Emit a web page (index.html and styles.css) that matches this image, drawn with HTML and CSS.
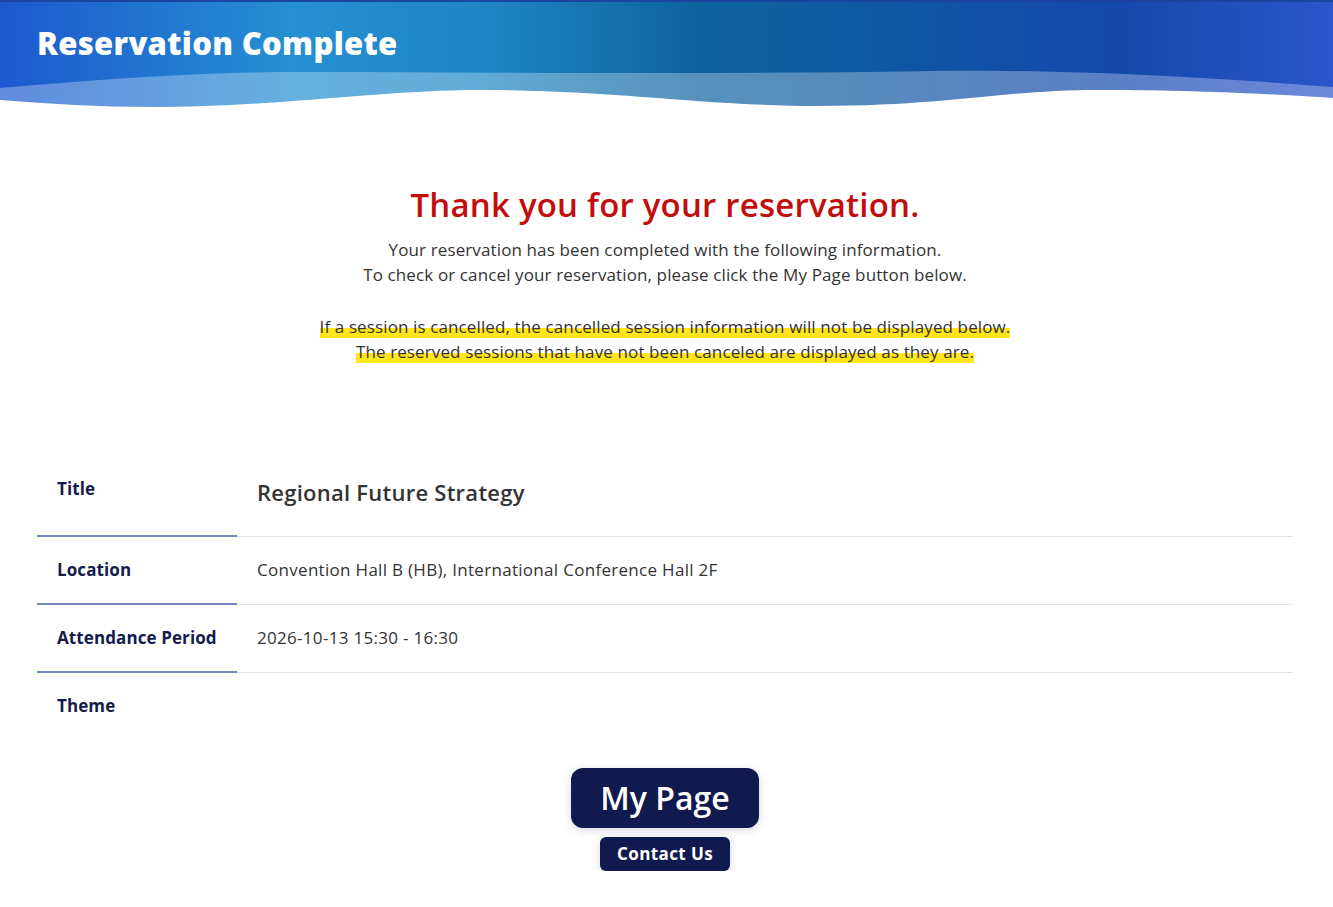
FILE: index.html
```html
<!DOCTYPE html>
<html lang="en">
<head>
<meta charset="utf-8">
<title>Reservation Complete</title>
<link rel="stylesheet" href="styles.css">
</head>
<body>
<header class="hero">
  <h1 class="hero-title">Reservation Complete</h1>
  <svg class="hero-wave" viewBox="0 0 1333 40" preserveAspectRatio="none" aria-hidden="true">
    <path d="M0 21 C 100 12, 200 5, 300 5 C 500 5, 700 8, 930 4 C 1100 2, 1250 14, 1333 20 L1333 40 L0 40 Z" fill="rgba(255,255,255,0.3)"/>
    <path d="M0 33 C 50 37, 100 40, 150 40 C 280 40, 380 23, 480 23 C 620 23, 700 39, 820 39 C 950 39, 1000 23, 1100 23 C 1200 23, 1290 28, 1333 31 L1333 40 L0 40 Z" fill="#ffffff"/>
  </svg>
</header>

<main class="content">
  <section class="intro">
    <h2 class="thanks">Thank you for your reservation.</h2>
    <p class="lead">Your reservation has been completed with the following information.<br>To check or cancel your reservation, please click the My Page button below.</p>
    <p class="notice"><span class="mark">If a session is cancelled, the cancelled session information will not be displayed below.</span><br><span class="mark">The reserved sessions that have not been canceled are displayed as they are.</span></p>
  </section>

  <dl class="details">
    <div class="row row-title">
      <dt class="label">Title</dt>
      <dd class="value value-title">Regional Future Strategy</dd>
    </div>
    <div class="row">
      <dt class="label">Location</dt>
      <dd class="value">Convention Hall B (HB), International Conference Hall 2F</dd>
    </div>
    <div class="row">
      <dt class="label">Attendance Period</dt>
      <dd class="value">2026-10-13 15:30 - 16:30</dd>
    </div>
    <div class="row row-last">
      <dt class="label">Theme</dt>
      <dd class="value"></dd>
    </div>
  </dl>

  <div class="actions">
    <a class="btn btn-main" href="#">My Page</a>
    <a class="btn btn-sub" href="#">Contact Us</a>
  </div>
</main>
</body>
</html>
```
FILE: styles.css
```css
* { box-sizing: border-box; }
html, body { margin: 0; padding: 0; background: #fff; }
body {
  font-family: "Open Sans", "Lato", sans-serif;
  color: #333;
}
.hero {
  height: 107px;
  display: flex;
  flex-direction: column;
  justify-content: space-between;
  background: linear-gradient(90deg, #1d58cf 0%, #2590d2 22%, #1f86c6 36%, #0e639f 52%, #0f57a3 66%, #1449ac 84%, #2c55cb 100%);
  border-top: 2px solid #1a44a0;
}
.hero-title {
  margin: 0;
  padding: 22px 0 0 37px;
  font-size: 31px;
  font-weight: 800;
  letter-spacing: 0.3px;
  color: #fff;
  line-height: 38px;
}
.hero-wave {
  display: block;
  width: 100%;
  height: 40px;
}
.content {
  padding: 0 40px 0 37px;
}
.intro {
  text-align: center;
  padding-top: 77px;
}
.thanks {
  margin: 0 0 11px;
  color: #c30d0d;
  font-size: 33px;
  font-weight: 600;
  letter-spacing: 0.2px;
  line-height: 42px;
}
.lead, .notice {
  margin: 0;
  font-size: 17px;
  letter-spacing: 0.12px;
  line-height: 25px;
  color: #333;
}
.lead { margin-bottom: 27px; }
.mark {
  background: linear-gradient(transparent 55%, #ffe51a 55%);
}
.details {
  margin: 96px 0 0;
}
.row {
  display: grid;
  grid-template-columns: 200px 1fr;
}
.label {
  margin: 0;
  padding: 21px 20px 21px;
  color: #151c4d;
  font-weight: 700;
  font-size: 17px;
  letter-spacing: 0.1px;
  line-height: 24px;
  border-bottom: 2px solid #7088b8;
}
.value {
  margin: 0;
  padding: 21px 20px 22px;
  font-size: 17px;
  letter-spacing: 0.3px;
  line-height: 24px;
  color: #333;
  border-bottom: 1px solid #e2e2e2;
}
.row-title .label { padding: 17px 20px 34px; }
.row-title .value {
  padding: 17px 20px 29px;
  font-size: 22px;
  font-weight: 600;
  letter-spacing: 0.25px;
  line-height: 30px;
}
.row-last .label, .row-last .value { border-bottom: 0; }
.actions {
  display: flex;
  flex-direction: column;
  align-items: center;
  gap: 9px;
  padding-top: 29px;
}
.btn {
  display: block;
  color: #fff;
  background: #111a4e;
  text-decoration: none;
  font-weight: 600;
  text-align: center;
  box-shadow: 0 2px 8px rgba(40, 40, 90, 0.18);
}
.btn-main {
  width: 188px;
  height: 60px;
  line-height: 60px;
  font-size: 32px;
  border-radius: 12px;
}
.btn-sub {
  width: 130px;
  height: 34px;
  line-height: 34px;
  font-size: 17px;
  font-weight: 700;
  letter-spacing: 0.4px;
  border-radius: 6px;
}
```
